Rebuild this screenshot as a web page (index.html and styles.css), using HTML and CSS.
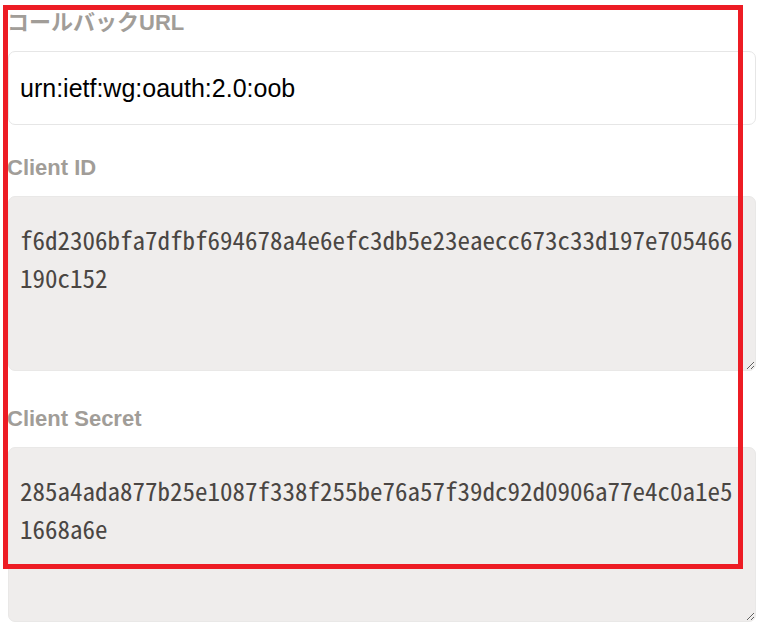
FILE: index.html
```html
<!DOCTYPE html>
<html lang="ja">
<head>
<meta charset="utf-8">
<link rel="stylesheet" href="styles.css">
</head>
<body>
<div class="form">
  <div class="field">
    <label class="label">コールバックURL</label>
    <input class="input" type="text" value="urn:ietf:wg:oauth:2.0:oob">
  </div>
  <div class="field">
    <label class="label">Client ID</label>
    <textarea class="area">f6d2306bfa7dfbf694678a4e6efc3db5e23eaecc673c33d197e705466190c152</textarea>
  </div>
  <div class="field">
    <label class="label">Client Secret</label>
    <textarea class="area">285a4ada877b25e1087f338f255be76a57f39dc92d0906a77e4c0a1e51668a6e</textarea>
  </div>
</div>
<div class="highlight"></div>
</body>
</html>
```
FILE: styles.css
```css
html, body {
  margin: 0;
  padding: 0;
  background: #ffffff;
}
body {
  width: 763px;
  height: 630px;
  overflow: hidden;
  position: relative;
  font-family: "Liberation Sans", Arial, "Noto Sans CJK JP", sans-serif;
}
.form {
  padding: 7px 7px 0 8px;
  display: flex;
  flex-direction: column;
}
.field {
  display: flex;
  flex-direction: column;
}
.label {
  display: block;
  font-size: 22px;
  line-height: 31px;
  font-weight: bold;
  color: #a19d98;
  margin-left: -1px;
  margin-bottom: 13px;
  font-family: "Liberation Sans", Arial, "Noto Sans CJK JP", sans-serif;
}
.input {
  display: block;
  box-sizing: border-box;
  width: 748px;
  height: 74px;
  margin: 0 0 27px 0;
  padding: 0 11px;
  border: 1px solid #e6e6e6;
  border-radius: 7px;
  background: #ffffff;
  color: #000000;
  font-family: "Liberation Sans", Arial, sans-serif;
  font-size: 25px;
  outline: none;
}
.area {
  display: block;
  box-sizing: border-box;
  width: 748px;
  height: 175px;
  margin: 0 0 32px 0;
  padding: 24px 12px 12px 11px;
  border: 1px solid #e9e8e7;
  border-radius: 7px;
  background: #efedec;
  color: #4a4643;
  font-family: "Noto Sans Mono CJK JP", "Liberation Mono", monospace;
  font-size: 25px;
  line-height: 37.5px;
  word-break: break-all;
  overflow: hidden;
  resize: both;
  outline: none;
}
.highlight {
  position: absolute;
  left: 3px;
  top: 5px;
  width: 740px;
  height: 564px;
  box-sizing: border-box;
  border: 5px solid #ed1c24;
  pointer-events: none;
}
```
